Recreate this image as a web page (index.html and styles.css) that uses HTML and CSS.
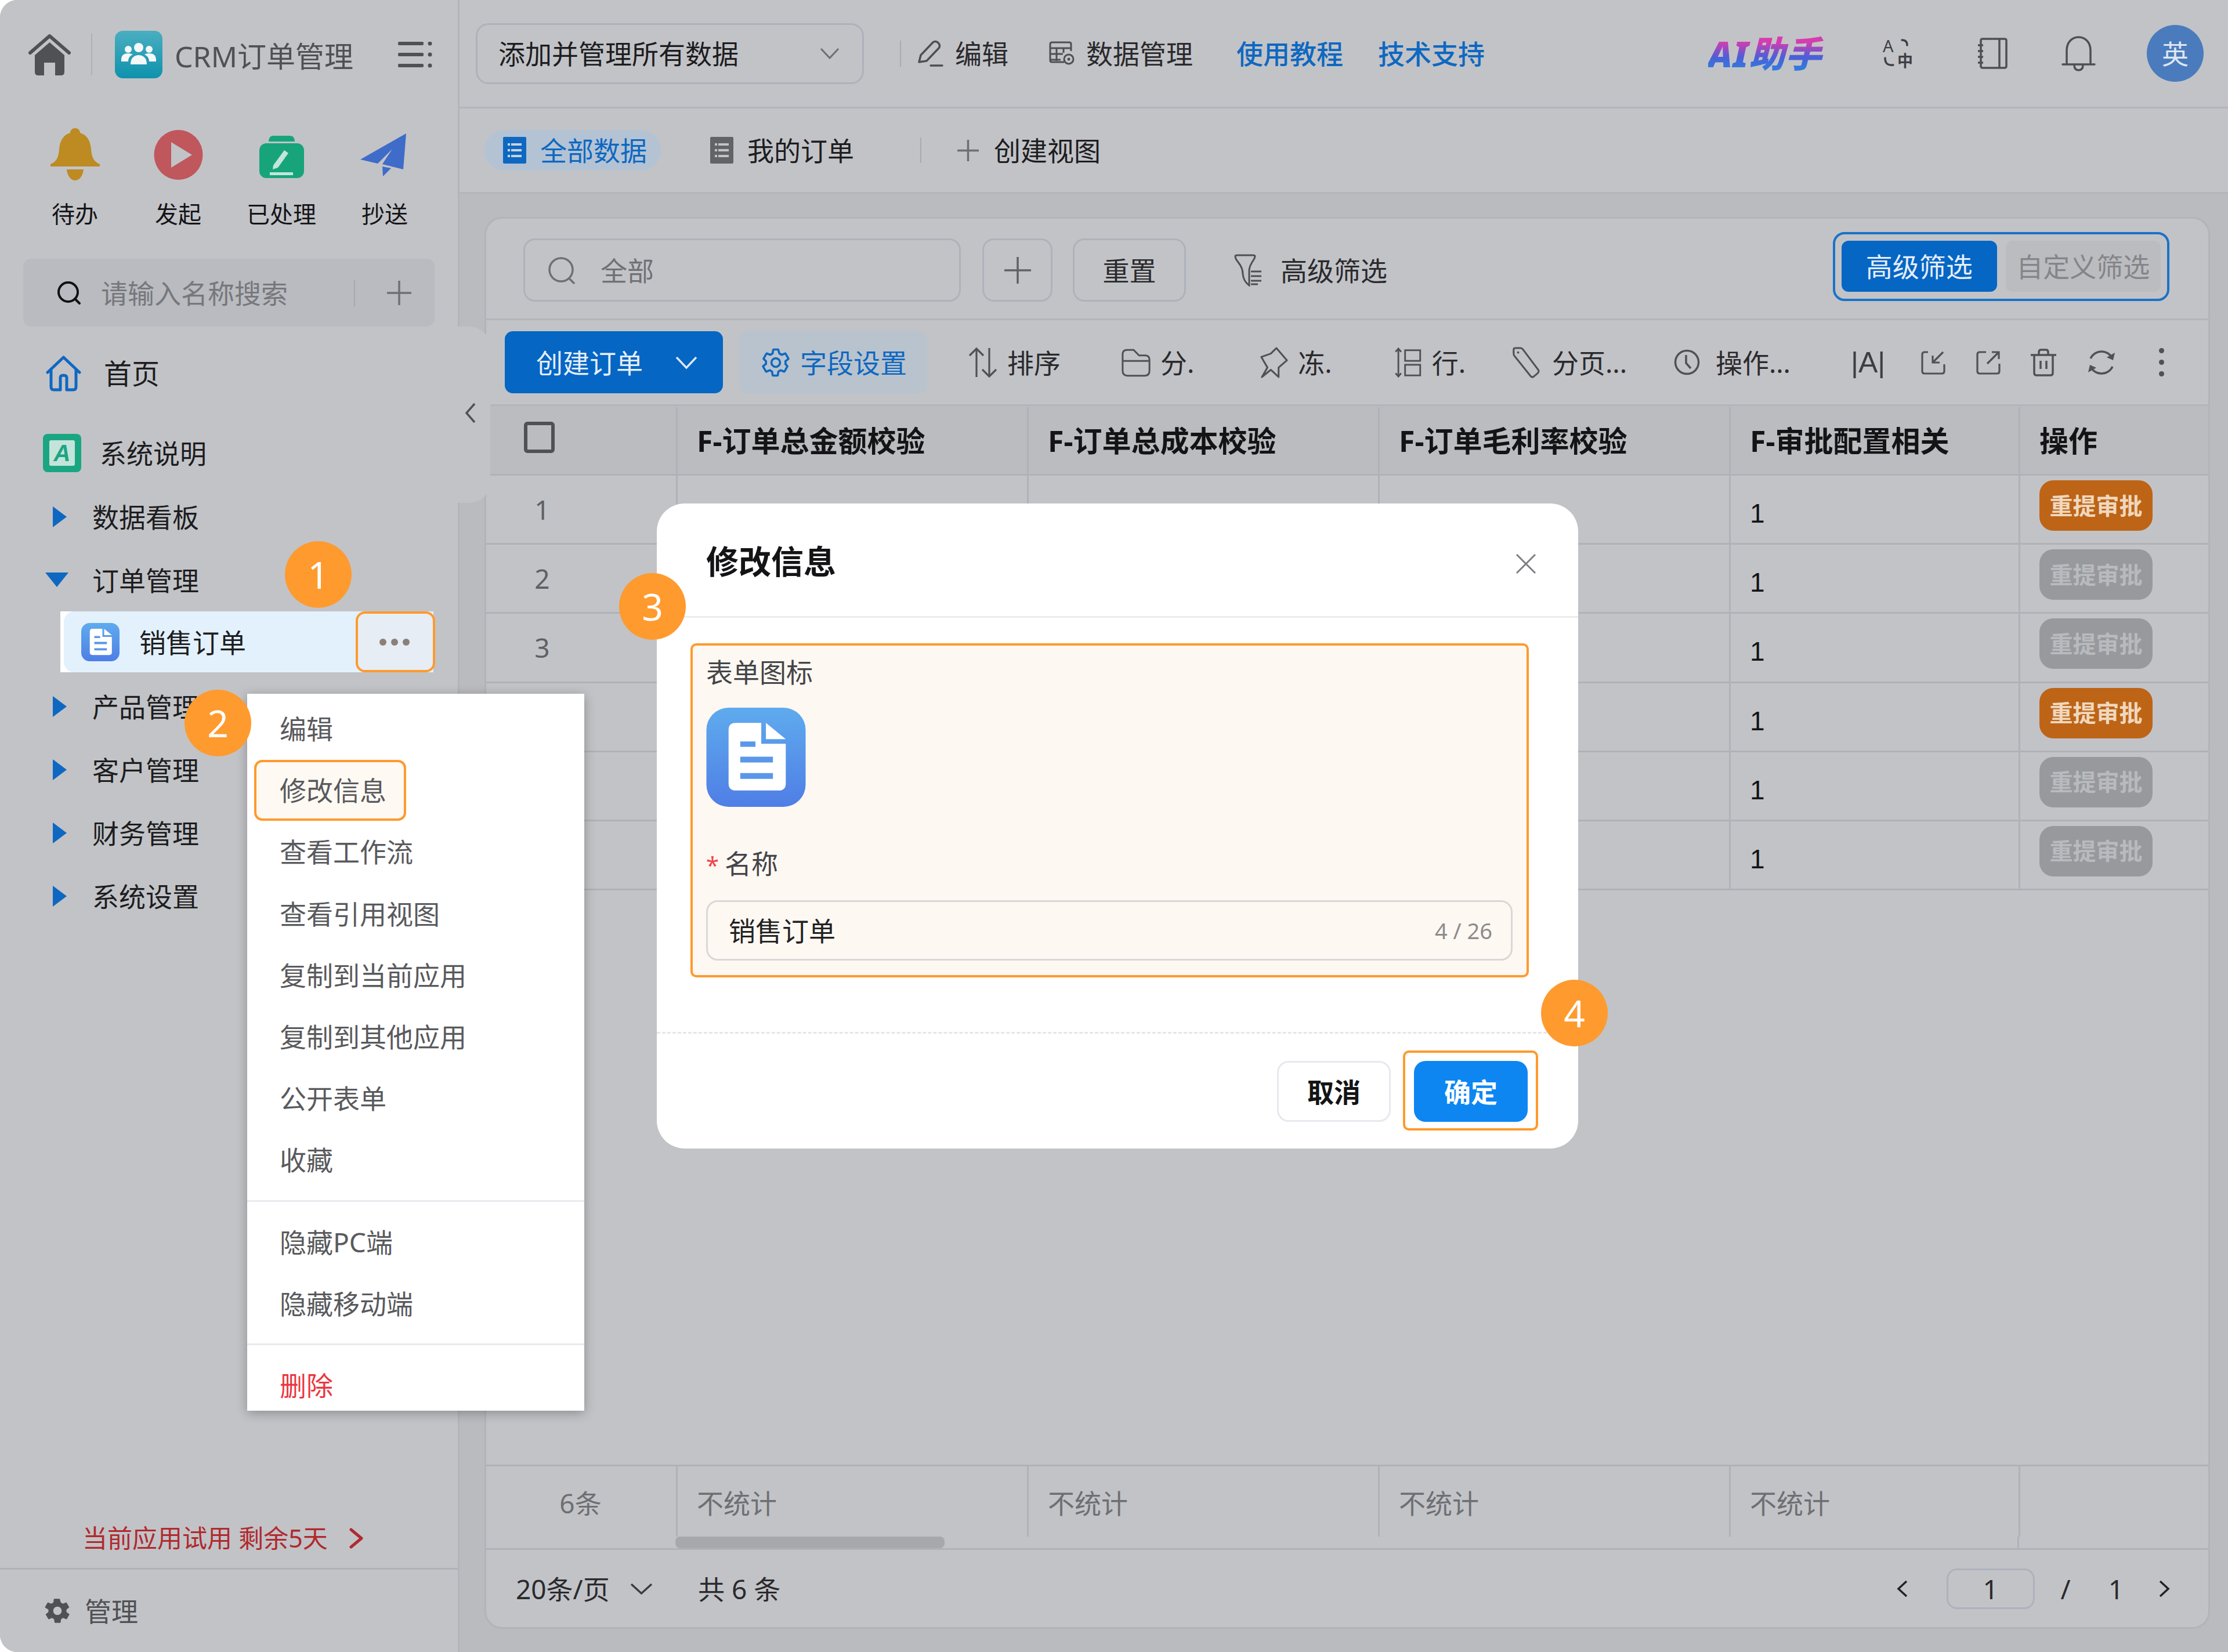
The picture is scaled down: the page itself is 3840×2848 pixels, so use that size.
FILE: index.html
```html
<!DOCTYPE html>
<html lang="zh-CN">
<head>
<meta charset="utf-8">
<title>CRM订单管理</title>
<link rel="stylesheet" href="styles.css">
</head>
<body>
<div class="app">
  <aside class="sidebar">
    <div class="brand">
      <svg class="i-home" viewBox="0 0 73 72"><path d="M3 33 36.500 4 70 33" fill="none" stroke="#505155" stroke-width="6" stroke-linejoin="round" stroke-linecap="round"/><path d="M36.500 15 62 37v29q0 6-6 6H46V50H27v22H17q-6 0-6-6V37z" fill="#505155"/></svg>
      <span class="brand-sep"></span>
      <span class="app-tile">
        <svg viewBox="0 0 82 82"><g fill="#f4f8fa"><circle cx="41" cy="29" r="8"/><circle cx="23" cy="32" r="6"/><circle cx="59" cy="32" r="6"/><path d="M11 50c0-8 5-11 12-11 4 0 6 1 8 2-5 2-8 6-8 12H11z"/><path d="M71 50c0-8-5-11-12-11-4 0-6 1-8 2 5 2 8 6 8 12h12z"/><path d="M27 58c0-11 6-16 14-16s14 5 14 16z"/></g></svg>
      </span>
      <span class="brand-name">CRM订单管理</span>
      <svg class="i-burger" viewBox="0 0 59 45"><g fill="#505155"><rect width="44" height="6" y="0" rx="2"/><rect width="44" height="6" y="19" rx="2"/><rect width="44" height="6" y="38" rx="2"/><circle cx="55" cy="3" r="3.500"/><circle cx="55" cy="22" r="3.500"/><circle cx="55" cy="41" r="3.500"/></g></svg>
    </div>

    <div class="shortcuts">
      <div class="shortcut">
        <svg class="i-short" viewBox="0 0 85 90"><path fill="#bd8b22" d="M42.500 0c5 0 8.500 3.500 8.500 8 13 4 18 15 19 28 1 12 3 21 15 26v4H0v-4c12-5 14-14 15-26 1-13 6-24 19-28 0-4.500 3.500-8 8.500-8zM28 71h29c-1 11-7 19-14.500 19S29 82 28 71z"/></svg>
        <span>待办</span>
      </div>
      <div class="shortcut">
        <svg class="i-short" viewBox="0 0 85 90"><ellipse cx="42.500" cy="46" rx="42" ry="43" fill="#bf575c"/><path d="M30 24 66 46 30 68z" fill="#c2c3c7"/></svg>
        <span>发起</span>
      </div>
      <div class="shortcut">
        <svg class="i-short" viewBox="0 0 85 90"><path d="M20 23c0-6 3-10 8-10h29c5 0 8 4 8 10H20z" fill="#18a47b"/><rect x="4" y="26" width="77" height="60" rx="12" fill="#18a47b"/><path d="M28 64 47 38l7 5-18 25-9 3zM22 76h40v5H22z" fill="#c2e6da"/></svg>
        <span>已处理</span>
      </div>
      <div class="shortcut">
        <svg class="i-short" viewBox="0 0 85 90"><path d="M79 9 74 71 38 62 55 36 30 61 0 54zM38 66 53 69 39 83z" fill="#3f6bc9"/></svg>
        <span>抄送</span>
      </div>
    </div>

    <div class="side-search">
      <svg class="i-sq" viewBox="0 0 42 42"><circle cx="19.500" cy="19.500" r="16.500" fill="none" stroke="#111" stroke-width="4"/><path d="M31 31 39 39" stroke="#111" stroke-width="4" stroke-linecap="round"/></svg>
      <span class="side-placeholder">请输入名称搜索</span>
      <span class="side-sep"></span>
      <svg class="i-sq i-sideplus" viewBox="0 0 42 42"><path d="M21 0v42M0 21h42" stroke="#6f7074" stroke-width="3.500"/></svg>
    </div>

    <nav class="nav">
      <div class="nav-home">
        <svg class="i-navhome" viewBox="0 0 61 62"><path d="M3 29 30.500 3 58 29M9 24v30q0 5 5 5h11V38q0-4 5.500-4T36 38v21h11q5 0 5-5V24" fill="none" stroke="#0e68c1" stroke-width="5" stroke-linejoin="round" stroke-linecap="round"/></svg>
        <span>首页</span>
      </div>
      <div class="nav-doc">
        <svg class="i-sysdoc" viewBox="0 0 66 66"><rect width="66" height="66" rx="8" fill="#1ba682"/><rect x="11" y="11" width="44" height="44" rx="3" fill="#c4e4db"/><text x="33" y="47" text-anchor="middle" font-family="'Liberation Sans',sans-serif" font-size="40" font-weight="700" font-style="italic" fill="#1ba682">A</text></svg>
        <span>系统说明</span>
      </div>
      <div class="tree-row"><svg class="i-right" viewBox="0 0 25 36"><path d="M1 0 25 18 1 36z" fill="#0e68c1"/></svg><span>数据看板</span></div>
      <div class="tree-row tree-open"><svg class="i-down" viewBox="0 0 40 25"><path d="M0 0h40L20 25z" fill="#0e68c1"/></svg><span>订单管理</span></div>
      <div class="tree-leaf">
        <div class="leaf-inner">
          <div class="leaf-fill">
            <svg class="i-leafdoc" viewBox="0 0 170 170"><defs><linearGradient id="docA" x1="0" y1="0" x2="0" y2="1"><stop offset="0" stop-color="#5fabee"/><stop offset="1" stop-color="#4f7ee5"/></linearGradient></defs><rect width="170" height="170" rx="38" fill="url(#docA)"/><path d="M50 26h44v36h42v68q0 12-12 12H50q-12 0-12-12V38q0-12 12-12zM102 26l34 28h-34z" fill="#fff"/><path d="M58 58h26v9H58zM58 84h56v10H58zM58 112h56v10H58z" fill="#5a97ea"/></svg>
            <span>销售订单</span>
            <span class="leaf-more"><i></i><i></i><i></i></span>
          </div>
        </div>
      </div>
      <div class="tree-row"><svg class="i-right" viewBox="0 0 25 36"><path d="M1 0 25 18 1 36z" fill="#0e68c1"/></svg><span>产品管理</span></div>
      <div class="tree-row"><svg class="i-right" viewBox="0 0 25 36"><path d="M1 0 25 18 1 36z" fill="#0e68c1"/></svg><span>客户管理</span></div>
      <div class="tree-row"><svg class="i-right" viewBox="0 0 25 36"><path d="M1 0 25 18 1 36z" fill="#0e68c1"/></svg><span>财务管理</span></div>
      <div class="tree-row"><svg class="i-right" viewBox="0 0 25 36"><path d="M1 0 25 18 1 36z" fill="#0e68c1"/></svg><span>系统设置</span></div>
    </nav>

    <div class="trial">
      <span>当前应用试用 剩余5天</span>
      <svg class="i-trial" viewBox="0 0 26 36"><path d="M4 3 22 18 4 33" fill="none" stroke="#b02a2e" stroke-width="5" stroke-linecap="round" stroke-linejoin="round"/></svg>
    </div>
    <div class="manage">
      <svg class="i-gear" viewBox="0 0 24 24"><path fill="#505155" d="M19.400 13c.1-.3.100-.7.100-1s0-.7-.1-1l2.100-1.600c.2-.1.200-.4.100-.6l-2-3.500c-.1-.2-.4-.3-.6-.2l-2.500 1c-.5-.4-1.100-.7-1.700-1L14 2.400c0-.2-.2-.4-.5-.4h-4c-.2 0-.4.200-.5.400l-.4 2.700c-.6.300-1.200.6-1.700 1l-2.500-1c-.2-.1-.5 0-.6.200l-2 3.500c-.1.200-.1.500.1.600L4.600 11c-.1.300-.1.700-.1 1s0 .7.100 1l-2.100 1.600c-.2.100-.2.400-.1.600l2 3.500c.1.200.4.300.6.200l2.500-1c.5.400 1.100.7 1.700 1l.4 2.700c.1.200.3.400.5.400h4c.3 0 .5-.2.500-.4l.4-2.700c.6-.3 1.200-.6 1.700-1l2.500 1c.2.100.5 0 .6-.2l2-3.500c.1-.2.100-.5-.1-.6zM12 15.500a3.500 3.500 0 1 1 0-7 3.500 3.500 0 0 1 0 7z"/></svg>
      <span>管理</span>
    </div>
  </aside>

  <main class="main">
    <header class="topbar">
      <div class="select">
        <span>添加并管理所有数据</span>
        <svg class="i-selchev" viewBox="0 0 34 20"><path d="M2 2 17 18 32 2" fill="none" stroke="#6e6f73" stroke-width="3"/></svg>
      </div>
      <span class="top-sep"></span>
      <svg class="i-pencil" viewBox="0 0 45 46"><path d="M3 38 6 26 27 4q4-3 8 0l2 2q3 4 0 8L16 36zM23 44h20" fill="none" stroke="#4e4f53" stroke-width="3.500" stroke-linejoin="round" stroke-linecap="round"/></svg>
      <span class="top-item top-edit">编辑</span>
      <svg class="i-db" viewBox="0 0 44 42"><path d="M26 36H5q-3 0-3-3V5q0-3 3-3h30q3 0 3 3v12M2 12h36M2 22h22M2 32h18M13 12v22M25 12v8" fill="none" stroke="#4e4f53" stroke-width="3"/><circle cx="34" cy="31" r="8" fill="none" stroke="#4e4f53" stroke-width="3"/><circle cx="34" cy="31" r="2.500" fill="#4e4f53"/></svg>
      <span class="top-item top-data">数据管理</span>
      <a class="top-link top-link-a">使用教程</a>
      <a class="top-link top-link-b">技术支持</a>
      <span class="ai-mark">AI助手</span>
      <svg class="i-trans" viewBox="0 -8 52 68"><text x="0" y="24" font-family="'Noto Sans',sans-serif" font-size="29" fill="#3f4044">A</text><text x="25" y="49" font-family="'Noto Sans CJK SC',sans-serif" font-size="27" font-weight="700" fill="#3f4044">中</text><path d="M33 3q9 0 9 9M18 46q-14 2-14-12" fill="none" stroke="#3f4044" stroke-width="3.500" stroke-linecap="round"/></svg>
      <svg class="i-book" viewBox="0 0 52 54"><path d="M6 5q0-3 3-3h38q3 0 3 3v44q0 3-3 3H9q-3 0-3-3zM38 2v50M1 13h9M1 23h9M1 33h9M1 43h9" fill="none" stroke="#4e4f53" stroke-width="3.500"/></svg>
      <svg class="i-topbell" viewBox="0 0 59 61"><path d="M2 49h55M9 49V25C9 11 18 2 29.500 2S50 11 50 25v24M22 50q0 9 7.500 9t7.500-9" fill="none" stroke="#4e4f53" stroke-width="3.500" stroke-linecap="round"/></svg>
      <span class="avatar">英</span>
    </header>

    <div class="tabs">
      <div class="tab tab-active">
        <svg class="i-tab" viewBox="0 0 40 46"><rect width="40" height="46" rx="2" fill="#0e68c1"/><path d="M8 11h24v4H8zM8 21h24v4H8zM8 31h24v4H8z" fill="#c7d3df"/><path d="M13 8v30" stroke="#0e68c1" stroke-width="2"/></svg>
        <span>全部数据</span>
      </div>
      <div class="tab tab-mine">
        <svg class="i-tab" viewBox="0 0 40 46"><rect width="40" height="46" rx="2" fill="#626367"/><path d="M8 11h24v4H8zM8 21h24v4H8zM8 31h24v4H8z" fill="#c2c3c7"/><path d="M13 8v30" stroke="#626367" stroke-width="2"/></svg>
        <span>我的订单</span>
      </div>
      <span class="tab-sep"></span>
      <div class="tab tab-create">
        <svg class="i-tabplus" viewBox="0 0 37 37"><path d="M18.500 0v37M0 18.500h37" stroke="#6e6f73" stroke-width="3.500"/></svg>
        <span>创建视图</span>
      </div>
    </div>

    <div class="workspace">
      <section class="card">
        <div class="filters">
          <div class="filter-search">
            <svg class="i-fsearch" viewBox="0 0 46 48"><circle cx="22" cy="23" r="20" fill="none" stroke="#6f7074" stroke-width="3.500"/><path d="M36 38 44 46" stroke="#6f7074" stroke-width="3.500" stroke-linecap="round"/></svg>
            <span>全部</span>
          </div>
          <button class="btn-outline btn-plus"><svg class="i-fplus" viewBox="0 0 46 46"><path d="M23 0v46M0 23h46" stroke="#606165" stroke-width="3.500"/></svg></button>
          <button class="btn-outline btn-reset">重置</button>
          <svg class="i-funnel" viewBox="0 0 52 56"><path d="M3 4q0-2 3-2h28q3 0 3 2 0 3-5 10-4 6-5 13v27q-10-7-11-20 0-10-8-20-5-6-5-10zM30 30h18M30 38h18M30 46h18M30 52h12" fill="none" stroke="#4e4f53" stroke-width="3"/></svg>
          <span class="adv-text">高级筛选</span>
          <div class="mode-toggle">
            <span class="mode mode-on">高级筛选</span>
            <span class="mode mode-off">自定义筛选</span>
          </div>
        </div>

        <div class="toolbar">
          <button class="btn-create"><span>创建订单</span><svg class="i-createchev" viewBox="0 0 38 24"><path d="M2 3 19 21 36 3" fill="none" stroke="#dfe8f2" stroke-width="3.500"/></svg></button>
          <button class="btn-fields">
            <svg class="i-cog" viewBox="0 0 24 24"><path fill="none" stroke="#0e68c1" stroke-width="1.600" stroke-linejoin="round" d="M19.400 13c.1-.3.100-.7.100-1s0-.7-.1-1l2.100-1.600c.2-.1.200-.4.100-.6l-2-3.500c-.1-.2-.4-.3-.6-.2l-2.500 1c-.5-.4-1.100-.7-1.700-1L14 2.400c0-.2-.2-.4-.5-.4h-3c-.2 0-.4.200-.5.400l-.4 2.700c-.6.300-1.200.6-1.700 1l-2.500-1c-.2-.1-.5 0-.6.200l-2 3.500c-.1.200-.1.500.1.600L4.600 11c-.1.300-.1.700-.1 1s0 .7.100 1l-2.100 1.600c-.2.100-.2.400-.1.600l2 3.500c.1.200.4.300.6.200l2.500-1c.5.400 1.100.7 1.700 1l.4 2.700c.1.200.3.400.5.400h3c.3 0 .5-.2.500-.4l.4-2.700c.6-.3 1.200-.6 1.700-1l2.500 1c.2.100.5 0 .6-.2l2-3.500c.1-.2.100-.5-.1-.6z"/><circle cx="12" cy="12" r="3.300" fill="none" stroke="#0e68c1" stroke-width="1.600"/></svg>
            <span>字段设置</span>
          </button>
          <div class="tool tool-sort"><svg class="i-tool i-arrows" viewBox="0 0 50 54"><path d="M14 52V3M2 15 14 3 26 15M36 2v49M24 39 36 51 48 39" fill="none" stroke="#505155" stroke-width="3.200"/></svg><span>排序</span></div>
          <div class="tool tool-group"><svg class="i-tool" viewBox="0 0 53 54"><path d="M2 12q0-8 8-8h12l10 10h11q8 0 8 8v20q0 9-9 9H11q-9 0-9-9zM2 24h49" fill="none" stroke="#505155" stroke-width="3.200"/></svg><span>分.</span></div>
          <div class="tool tool-freeze"><svg class="i-tool i-slim" viewBox="0 0 50 56"><path d="M29 2 48 24 33 37 33 54 19 41 3 54 13 37 2 18 19 12z" fill="none" stroke="#505155" stroke-width="3.200" stroke-linejoin="round"/></svg><span>冻.</span></div>
          <div class="tool tool-row"><svg class="i-tool i-slim" viewBox="0 0 47 56"><path d="M6 3v50M1 9 6 3l5 6M1 47l5 6 5-6" fill="none" stroke="#505155" stroke-width="3"/><rect x="18" y="6" width="27" height="19" fill="none" stroke="#505155" stroke-width="3"/><rect x="18" y="32" width="27" height="19" fill="none" stroke="#505155" stroke-width="3"/></svg><span>行.</span></div>
          <div class="tool tool-page"><svg class="i-tool" viewBox="0 0 50 56"><path d="M3 5q0-3 3-3h9q3 0 5 3l27 36q2 3-1 6l-7 6q-3 2-5 0L5 17q-2-2-2-5z" fill="none" stroke="#505155" stroke-width="3.200"/><circle cx="11" cy="10" r="2" fill="#505155"/></svg><span>分页...</span></div>
          <div class="tool tool-op"><svg class="i-tool i-clock" viewBox="0 0 45 45"><circle cx="22.500" cy="22.500" r="20" fill="none" stroke="#505155" stroke-width="3.500"/><path d="M21 10v14l8 9" fill="none" stroke="#505155" stroke-width="3.500"/></svg><span>操作...</span></div>
          <span class="text-size">|A|</span>
          <svg class="i-action i-import" viewBox="0 0 44 44"><path d="M13 4H7Q3 4 3 8v29q0 4 4 4h30q4 0 4-4V25M39 4 21 22M21 10v12h12" fill="none" stroke="#505155" stroke-width="3.200"/></svg>
          <svg class="i-action i-export" viewBox="0 0 44 44"><path d="M18 4H7Q3 4 3 8v29q0 4 4 4h30q4 0 4-4V24M20 24 40 4M28 4h12v12" fill="none" stroke="#505155" stroke-width="3.200"/></svg>
          <svg class="i-action i-trash" viewBox="0 0 46 48"><path d="M1 11h44M7 11v31q0 4 4 4h24q4 0 4-4V11M15 10V6q0-4 4-4h8q4 0 4 4v4M18 21v14M28 21v14" fill="none" stroke="#505155" stroke-width="3.500"/></svg>
          <svg class="i-action i-refresh" viewBox="0 0 48 48"><path d="M5 17A21 21 0 0 1 43 17M43 31A21 21 0 0 1 5 31" fill="none" stroke="#505155" stroke-width="3.500"/><path d="M47 7 44 20 33 15zM1 41 4 28 15 33z" fill="#505155"/></svg>
          <span class="kebab"><i></i><i></i><i></i></span>
        </div>

        <div class="table">
          <div class="t-grid t-head">
            <div class="t-cell t-check"><span class="checkbox"></span></div>
            <div class="t-cell">F-订单总金额校验</div>
            <div class="t-cell">F-订单总成本校验</div>
            <div class="t-cell">F-订单毛利率校验</div>
            <div class="t-cell">F-审批配置相关</div>
            <div class="t-cell">操作</div>
          </div>
          <div class="t-grid t-row">
            <div class="t-cell t-num">1</div><div class="t-cell"></div><div class="t-cell"></div><div class="t-cell"></div>
            <div class="t-cell t-val">1</div>
            <div class="t-cell t-act"><span class="redo redo-on">重提审批</span></div>
          </div>
          <div class="t-grid t-row">
            <div class="t-cell t-num">2</div><div class="t-cell"></div><div class="t-cell"></div><div class="t-cell"></div>
            <div class="t-cell t-val">1</div>
            <div class="t-cell t-act"><span class="redo redo-off">重提审批</span></div>
          </div>
          <div class="t-grid t-row">
            <div class="t-cell t-num">3</div><div class="t-cell"></div><div class="t-cell"></div><div class="t-cell"></div>
            <div class="t-cell t-val">1</div>
            <div class="t-cell t-act"><span class="redo redo-off">重提审批</span></div>
          </div>
          <div class="t-grid t-row">
            <div class="t-cell t-num">4</div><div class="t-cell"></div><div class="t-cell"></div><div class="t-cell"></div>
            <div class="t-cell t-val">1</div>
            <div class="t-cell t-act"><span class="redo redo-on">重提审批</span></div>
          </div>
          <div class="t-grid t-row">
            <div class="t-cell t-num">5</div><div class="t-cell"></div><div class="t-cell"></div><div class="t-cell"></div>
            <div class="t-cell t-val">1</div>
            <div class="t-cell t-act"><span class="redo redo-off">重提审批</span></div>
          </div>
          <div class="t-grid t-row">
            <div class="t-cell t-num">6</div><div class="t-cell"></div><div class="t-cell"></div><div class="t-cell"></div>
            <div class="t-cell t-val">1</div>
            <div class="t-cell t-act"><span class="redo redo-off">重提审批</span></div>
          </div>
        </div>

        <div class="summary">
          <div class="t-grid sum-row">
            <div class="t-cell sum-count">6条</div>
            <div class="t-cell">不统计</div>
            <div class="t-cell">不统计</div>
            <div class="t-cell">不统计</div>
            <div class="t-cell">不统计</div>
            <div class="t-cell"></div>
          </div>
          <div class="scroll-strip"><span class="scroll-thumb"></span><span class="scroll-end"></span></div>
        </div>

        <div class="pager">
          <span class="page-size">20条/页</span>
          <svg class="i-pagechev" viewBox="0 0 41 22"><path d="M3 3 20.500 19 38 3" fill="none" stroke="#3b3c40" stroke-width="3.500"/></svg>
          <span class="page-total">共 6 条</span>
          <svg class="i-pgarrow i-prev" viewBox="0 0 21 30"><path d="M18 2 4 15 18 28" fill="none" stroke="#222" stroke-width="3.500"/></svg>
          <span class="page-input">1</span>
          <span class="page-slash">/</span>
          <span class="page-count">1</span>
          <svg class="i-pgarrow i-next" viewBox="0 0 21 30"><path d="M3 2 17 15 3 28" fill="none" stroke="#222" stroke-width="3.500"/></svg>
        </div>
      </section>
    </div>
  </main>

  <div class="side-bump">
    <svg class="i-collapse" viewBox="0 0 20 36"><path d="M17 2 3 18 17 34" fill="none" stroke="#505155" stroke-width="3.500"/></svg>
  </div>

  <ul class="context-menu">
    <li>编辑</li>
    <li class="menu-current"><span>修改信息</span></li>
    <li>查看工作流</li>
    <li>查看引用视图</li>
    <li>复制到当前应用</li>
    <li>复制到其他应用</li>
    <li>公开表单</li>
    <li>收藏</li>
    <li class="menu-sep"></li>
    <li>隐藏PC端</li>
    <li>隐藏移动端</li>
    <li class="menu-sep"></li>
    <li class="menu-danger">删除</li>
  </ul>

  <div class="modal">
    <div class="modal-head">
      <span class="modal-title">修改信息</span>
      <svg class="i-close" viewBox="0 0 36 36"><path d="M2 2 34 34M34 2 2 34" stroke="#7d7e82" stroke-width="3"/></svg>
    </div>
    <div class="modal-body">
      <div class="form-box">
        <div class="form-label">表单图标</div>
        <svg class="i-formdoc" viewBox="0 0 170 170"><defs><linearGradient id="docB" x1="0" y1="0" x2="0" y2="1"><stop offset="0" stop-color="#5fabee"/><stop offset="1" stop-color="#4f7ee5"/></linearGradient></defs><rect width="170" height="170" rx="38" fill="url(#docB)"/><path d="M50 26h44v36h42v68q0 12-12 12H50q-12 0-12-12V38q0-12 12-12zM102 26l34 28h-34z" fill="#fff"/><path d="M58 58h26v9H58zM58 84h56v10H58zM58 112h56v10H58z" fill="#5a97ea"/></svg>
        <div class="form-label form-name"><span class="req">*</span>名称</div>
        <div class="form-input"><span>销售订单</span><span class="counter">4 / 26</span></div>
      </div>
    </div>
    <div class="modal-foot">
      <button class="m-cancel">取消</button>
      <div class="m-ok-wrap"><button class="m-ok">确定</button></div>
    </div>
  </div>

  <span class="step step-1">1</span>
  <span class="step step-2">2</span>
  <span class="step step-3">3</span>
  <span class="step step-4">4</span>
</div>
</body>
</html>
```

FILE: styles.css
```css
* { box-sizing: border-box; }
html, body { margin: 0; padding: 0; background: #fff; }
body { font-family: "Noto Sans", "Noto Sans CJK SC", sans-serif; font-size: 46px; color: #1d1d1f; line-height: 60px; }
button { font: inherit; border: 0; padding: 0; background: none; color: inherit; }
svg { display: block; flex: none; }
ul { margin: 0; padding: 0; list-style: none; }

.app { position: relative; width: 3840px; height: 2848px; display: flex; overflow: hidden; border-radius: 30px 0 0 30px; background: #c2c3c7; }

/* Sidebar */
.sidebar { width: 792px; flex: none; display: flex; flex-direction: column; background: #c2c3c7; border-right: 3px solid #b3b5ba; }
.brand { display: flex; align-items: center; height: 82px; margin-top: 53px; padding-left: 49px; }
.i-home { width: 73px; height: 72px; }
.brand-sep { width: 2px; height: 72px; background: #aeb0b5; margin-left: 35px; }
.app-tile { width: 82px; height: 82px; margin-left: 39px; border-radius: 14px; background: linear-gradient(180deg, #4aaec0, #0f92ad); }
.app-tile svg { width: 82px; height: 82px; }
.brand-name { margin: 6px 0 0 21px; font-size: 50px; color: #505155; width: 307px; white-space: nowrap; }
.i-burger { width: 59px; height: 45px; margin-left: 78px; }

.shortcuts { display: grid; grid-template-columns: repeat(4, 178px); margin: 86px 0 0 40px; }
.shortcut { display: flex; flex-direction: column; align-items: center; font-size: 40px; color: #141416; }
.i-short { width: 85px; height: 90px; margin-bottom: 28px; }

.side-search { display: flex; align-items: center; height: 117px; margin: 47px 40px 0; background: #b9bbc0; border-radius: 14px; padding-left: 58px; }
.i-sq { width: 42px; height: 42px; }
.side-placeholder { margin-left: 34px; color: #77787c; width: 436px; white-space: nowrap; }
.side-sep { width: 2px; height: 46px; background: #a6a8ad; }
.i-sideplus { margin-left: 55px; }

.nav { padding-top: 27px; }
.nav-home { display: flex; align-items: center; height: 108px; padding-left: 79px; font-size: 48px; }
.i-navhome { width: 61px; height: 62px; margin-right: 39px; }
.nav-doc { display: flex; align-items: center; height: 110px; margin-top: 28px; padding-left: 74px; }
.i-sysdoc { width: 66px; height: 66px; margin-right: 32px; }
.tree-row { display: flex; align-items: center; height: 109px; padding-left: 90px; }
.i-right { width: 25px; height: 36px; margin-right: 44px; }
.tree-open { padding-left: 78px; }
.i-down { width: 40px; height: 25px; margin-right: 41px; }
.tree-leaf { height: 109px; margin-left: 104px; width: 643px; }
.leaf-inner { height: 105px; padding-left: 6px; background: #fff; }
.leaf-fill { display: flex; align-items: center; height: 105px; padding-left: 30px; background: #e3f1fd; border-radius: 18px 0 0 18px; }
.i-leafdoc { width: 66px; height: 66px; margin-right: 34px; }
.leaf-more { display: flex; align-items: center; justify-content: center; gap: 8px; width: 137px; height: 105px; margin-left: auto; margin-right: -3px; padding-right: 4px; background: #e6edf4; border: 4px solid #ff9a2e; border-radius: 16px; }
.leaf-more i { width: 12px; height: 12px; border-radius: 50%; background: #8a8078; }

.trial { display: flex; align-items: center; margin-top: auto; height: 60px; padding-left: 142px; color: #b02a2e; font-size: 43px; }
.i-trial { width: 26px; height: 36px; margin-left: 36px; }
.manage { display: flex; align-items: center; height: 145px; margin-top: 21px; padding: 0 0 0 74px; border-top: 3px solid #b0b2b7; color: #505155; }
.i-gear { width: 50px; height: 50px; margin-right: 22px; }

/* Main */
.main { flex: 1; min-width: 0; display: flex; flex-direction: column; }
.topbar { display: flex; align-items: center; height: 187px; flex: none; padding-left: 28px; border-bottom: 3px solid #b3b5ba; }
.select { display: flex; align-items: center; width: 669px; height: 105px; padding-left: 36px; border: 3px solid #aeb2ba; border-radius: 22px; white-space: nowrap; }
.i-selchev { width: 34px; height: 20px; margin-left: 140px; }
.top-sep { width: 2px; height: 45px; margin-left: 62px; background: #a9abb0; }
.i-pencil { width: 45px; height: 46px; margin-left: 28px; }
.top-item { white-space: nowrap; color: #2a2a2d; }
.top-edit { margin-left: 20px; }
.i-db { width: 44px; height: 42px; margin-left: 70px; }
.top-data { margin-left: 20px; }
.top-link { color: #0e68c1; font-weight: 500; white-space: nowrap; }
.top-link-a { margin-left: 75px; }
.top-link-b { margin-left: 60px; }
.ai-mark { margin-left: 385px; width: 201px; font-size: 62px; line-height: 70px; font-weight: 900; font-style: italic; white-space: nowrap; letter-spacing: 1px; background: linear-gradient(180deg, #d63cb0 22%, #4a5fd8 60%, #3578dc 85%); -webkit-background-clip: text; background-clip: text; color: transparent; }
.i-trans { width: 52px; height: 68px; margin-left: 100px; }
.i-book { width: 52px; height: 54px; margin-left: 111px; }
.i-topbell { width: 59px; height: 61px; margin-left: 93px; }
.avatar { display: flex; align-items: center; justify-content: center; width: 98px; height: 98px; margin-left: 88px; border-radius: 50%; background: #4a7bbd; color: #dde6f2; font-size: 46px; }

.tabs { display: flex; align-items: center; height: 147px; flex: none; padding-left: 43px; border-bottom: 3px solid #b3b5ba; }
.tab { display: flex; align-items: center; white-space: nowrap; }
.tab-active { width: 304px; height: 70px; padding-left: 32px; background: #b3c3d4; border-radius: 35px; color: #0e68c1; }
.i-tab { width: 40px; height: 46px; margin-right: 24px; }
.tab-mine { margin-left: 85px; }
.tab-sep { width: 2px; height: 44px; margin-left: 114px; background: #a9abb0; }
.tab-create { margin-left: 62px; }
.i-tabplus { width: 37px; height: 37px; margin-right: 26px; }

.workspace { flex: 1; min-height: 0; display: flex; padding: 40px 31px 40px 43px; background: #babbbf; }
.card { flex: 1; min-width: 0; display: flex; flex-direction: column; background: #c2c3c7; border: 3px solid #b2b4b9; border-radius: 30px; }

.filters { display: flex; align-items: flex-start; height: 175px; flex: none; padding: 34px 0 0 64px; border-bottom: 3px solid #b3b5ba; }
.filter-search { display: flex; align-items: center; width: 754px; height: 109px; padding-left: 40px; border: 3px solid #aeb2ba; border-radius: 20px; color: #707175; }
.i-fsearch { width: 46px; height: 48px; margin-right: 44px; }
.btn-outline { display: flex; align-items: center; justify-content: center; height: 109px; border: 3px solid #aeb2ba; border-radius: 20px; }
.btn-plus { width: 121px; margin-left: 37px; }
.i-fplus { width: 46px; height: 46px; }
.btn-reset { width: 195px; margin-left: 35px; color: #2a2a2d; }
.i-funnel { width: 52px; height: 56px; margin: 27px 0 0 82px; }
.adv-text { margin: 25px 0 0 29px; color: #2a2a2d; }
.mode-toggle { display: flex; gap: 15px; width: 580px; height: 119px; margin: -11px 0 0 768px; padding: 11px 11px 0; border: 4px solid #1a72c8; border-radius: 20px; }
.mode { display: flex; align-items: center; justify-content: center; width: 268px; height: 88px; border-radius: 12px; white-space: nowrap; }
.mode-on { background: #0566c4; color: #e6eef8; }
.mode-off { background: #bbbcbf; color: #84858a; }

.toolbar { display: flex; align-items: center; height: 145px; flex: none; padding-left: 32px; color: #2a2a2d; }
.btn-create { display: flex; align-items: center; width: 376px; height: 107px; padding-left: 54px; background: #0566c4; border-radius: 14px; color: #e6eef8; }
.i-createchev { width: 38px; height: 24px; margin-left: 56px; }
.btn-fields { display: flex; align-items: center; width: 324px; height: 107px; margin-left: 28px; padding-left: 36px; background: #b9c3cd; border-radius: 14px; color: #0e68c1; }
.i-cog { width: 54px; height: 54px; margin-right: 15px; }
.tool { display: flex; align-items: center; white-space: nowrap; }
.i-tool { width: 50px; height: 54px; margin-right: 17px; }
.i-slim { width: 48px; }
.tool .i-clock { width: 45px; height: 45px; margin-right: 27px; }
.tool-sort { margin-left: 71px; }
.tool-group { margin-left: 105px; }
.tool-freeze { margin-left: 114px; }
.tool-row { margin-left: 107px; }
.tool-page { margin-left: 79px; }
.tool-page .i-tool { margin-right: 20px; }
.tool-op { margin-left: 81px; }
.text-size { margin-left: 104px; font-family: "Liberation Sans", sans-serif; font-size: 50px; color: #3d3e42; }
.i-action { width: 44px; height: 44px; }
.i-import { margin-left: 61px; }
.i-export { margin-left: 51px; }
.i-trash { margin-left: 50px; width: 46px; height: 48px; }
.i-refresh { margin-left: 53px; width: 48px; height: 48px; }
.kebab { display: flex; flex-direction: column; gap: 11px; margin-left: 75px; }
.kebab i { width: 9px; height: 9px; border-radius: 50%; background: #505155; }

.table { flex: 1; min-height: 0; }
.t-grid { display: grid; grid-template-columns: 327px 605px 605px 605px 499px 1fr; }
.t-cell { display: flex; align-items: center; padding-left: 33px; border-left: 3px solid #b0b2b7; min-width: 0; white-space: nowrap; }
.t-cell:first-child { border-left: 0; padding-left: 0; justify-content: center; }
.t-head { height: 123px; background: #bbbcc0; border-top: 3px solid #b3b5ba; border-bottom: 3px solid #b0b2b7; font-weight: 700; font-size: 50px; color: #141416; padding-top: 2px; }
.checkbox { display: block; width: 53px; height: 54px; margin: -12px 144px 0 0; border: 6px solid #505155; border-radius: 6px; }
.t-row { height: 119.200px; border-bottom: 3px solid #b0b2b7; }
.t-num { color: #5f6064; padding-right: 134px; }
.t-val { font-family: "Liberation Sans", sans-serif; padding-top: 14px; color: #141416; }
.t-act { align-items: flex-start; padding-top: 8px; }
.redo { display: flex; align-items: center; justify-content: center; width: 195px; height: 87px; border-radius: 24px; font-size: 40px; font-weight: 700; }
.redo-on { background: #bd6417; color: #f0d8be; }
.redo-off { background: #97999d; color: #b8babd; }

.summary { flex: none; height: 147px; border-top: 3px solid #b0b2b7; border-bottom: 3px solid #b0b2b7; color: #6e6f73; }
.sum-row { height: 121px; }
.sum-row .t-cell { padding-top: 5px; }
.t-cell.sum-count { padding-right: 2px; }
.scroll-strip { display: flex; height: 20px; }
.scroll-thumb { width: 464px; height: 20px; margin-left: 326px; background: #a7a8ac; border-radius: 8px; }
.scroll-end { width: 329px; margin-left: auto; border-left: 3px solid #b0b2b7; }

.pager { display: flex; align-items: center; flex: none; height: 133px; padding-left: 51px; color: #2a2a2d; }
.page-size { white-space: nowrap; width: 163px; }
.i-pagechev { width: 41px; height: 22px; margin-left: 33px; }
.page-total { margin-left: 77px; white-space: nowrap; }
.i-pgarrow { width: 21px; height: 30px; }
.i-prev { margin-left: auto; }
.page-input { display: flex; align-items: center; justify-content: center; width: 152px; height: 70px; margin-left: 66px; border: 3px solid #aeb2ba; border-radius: 18px; }
.page-slash { margin-left: 45px; }
.page-count { margin-left: 65px; }
.i-next { margin-left: 60px; margin-right: 65px; }

/* Overlays */
.side-bump { position: absolute; left: 789px; top: 563px; width: 56px; height: 304px; display: flex; align-items: center; padding: 0 0 0 12px; background: #c2c3c7; border-radius: 0 36px 36px 0; }
.i-collapse { width: 20px; height: 36px; margin-top: -6px; }

.context-menu { position: absolute; left: 426px; top: 1196px; width: 581px; height: 1236px; padding-top: 7px; overflow: hidden; background: #fff; color: #595a5d; box-shadow: 0 4px 18px rgba(0, 0, 0, .28); }
.context-menu li { height: 106.200px; display: flex; align-items: center; padding-left: 56px; white-space: nowrap; }
.context-menu .menu-current { padding-left: 12px; }
.menu-current span { display: flex; align-items: center; width: 262px; height: 105px; padding-left: 40px; background: #fff9f3; border: 4px solid #ff9a2e; border-radius: 14px; }
.context-menu .menu-sep { height: 3px; margin: 16px 0; padding: 0; background: #e9e9ef; }
.context-menu .menu-danger { color: #e9373f; }

.modal { position: absolute; left: 1132px; top: 868px; width: 1588px; height: 1112px; display: flex; flex-direction: column; background: #fff; border-radius: 48px; }
.modal-head { display: flex; align-items: center; justify-content: space-between; height: 197px; flex: none; padding: 8px 72px 0 85px; border-bottom: 3px solid #ececec; }
.modal-title { margin-top: -4px; font-size: 56px; font-weight: 700; color: #141416; }
.i-close { width: 36px; height: 36px; margin-top: 6px; }
.modal-body { height: 717px; flex: none; padding: 44px 0 0 58px; border-bottom: 3px dashed #e6e6e6; }
.form-box { width: 1445px; height: 576px; padding: 15px 0 0 23px; background: #fef8f3; border: 4px solid #ff9a2e; border-radius: 10px; color: #444548; }
.i-formdoc { width: 172px; height: 171px; margin-top: 32px; }
.form-name { margin-top: 67px; }
.req { display: inline-block; width: 32px; color: #f0434a; font-size: 40px; }
.form-input { display: flex; align-items: center; justify-content: space-between; width: 1390px; height: 104px; margin-top: 31px; padding: 0 32px 0 36px; border: 3px solid #d8d8d8; border-radius: 20px; color: #222; }
.counter { font-size: 38px; color: #8c8c8c; }
.modal-foot { display: flex; justify-content: flex-end; padding: 29px 69px 0 0; }
.m-cancel { width: 196px; height: 105px; margin-top: 18px; margin-right: 21px; background: #fff; border: 3px solid #e8e8ee; border-radius: 20px; font-weight: 700; color: #141416; }
.m-ok-wrap { width: 233px; height: 138px; padding: 14px 0 0 15px; border: 4px solid #ff9a2e; border-radius: 10px; }
.m-ok { display: block; width: 196px; height: 105px; background: #0d86f2; border-radius: 20px; color: #fff; font-weight: 700; }

.step { position: absolute; display: flex; align-items: center; justify-content: center; width: 115px; height: 115px; border-radius: 50%; background: #ff9a2e; color: #fff; font-size: 64px; }
.step-1 { left: 491px; top: 933px; }
.step-2 { left: 318px; top: 1189px; }
.step-3 { left: 1067px; top: 988px; }
.step-4 { left: 2656px; top: 1689px; }
```
